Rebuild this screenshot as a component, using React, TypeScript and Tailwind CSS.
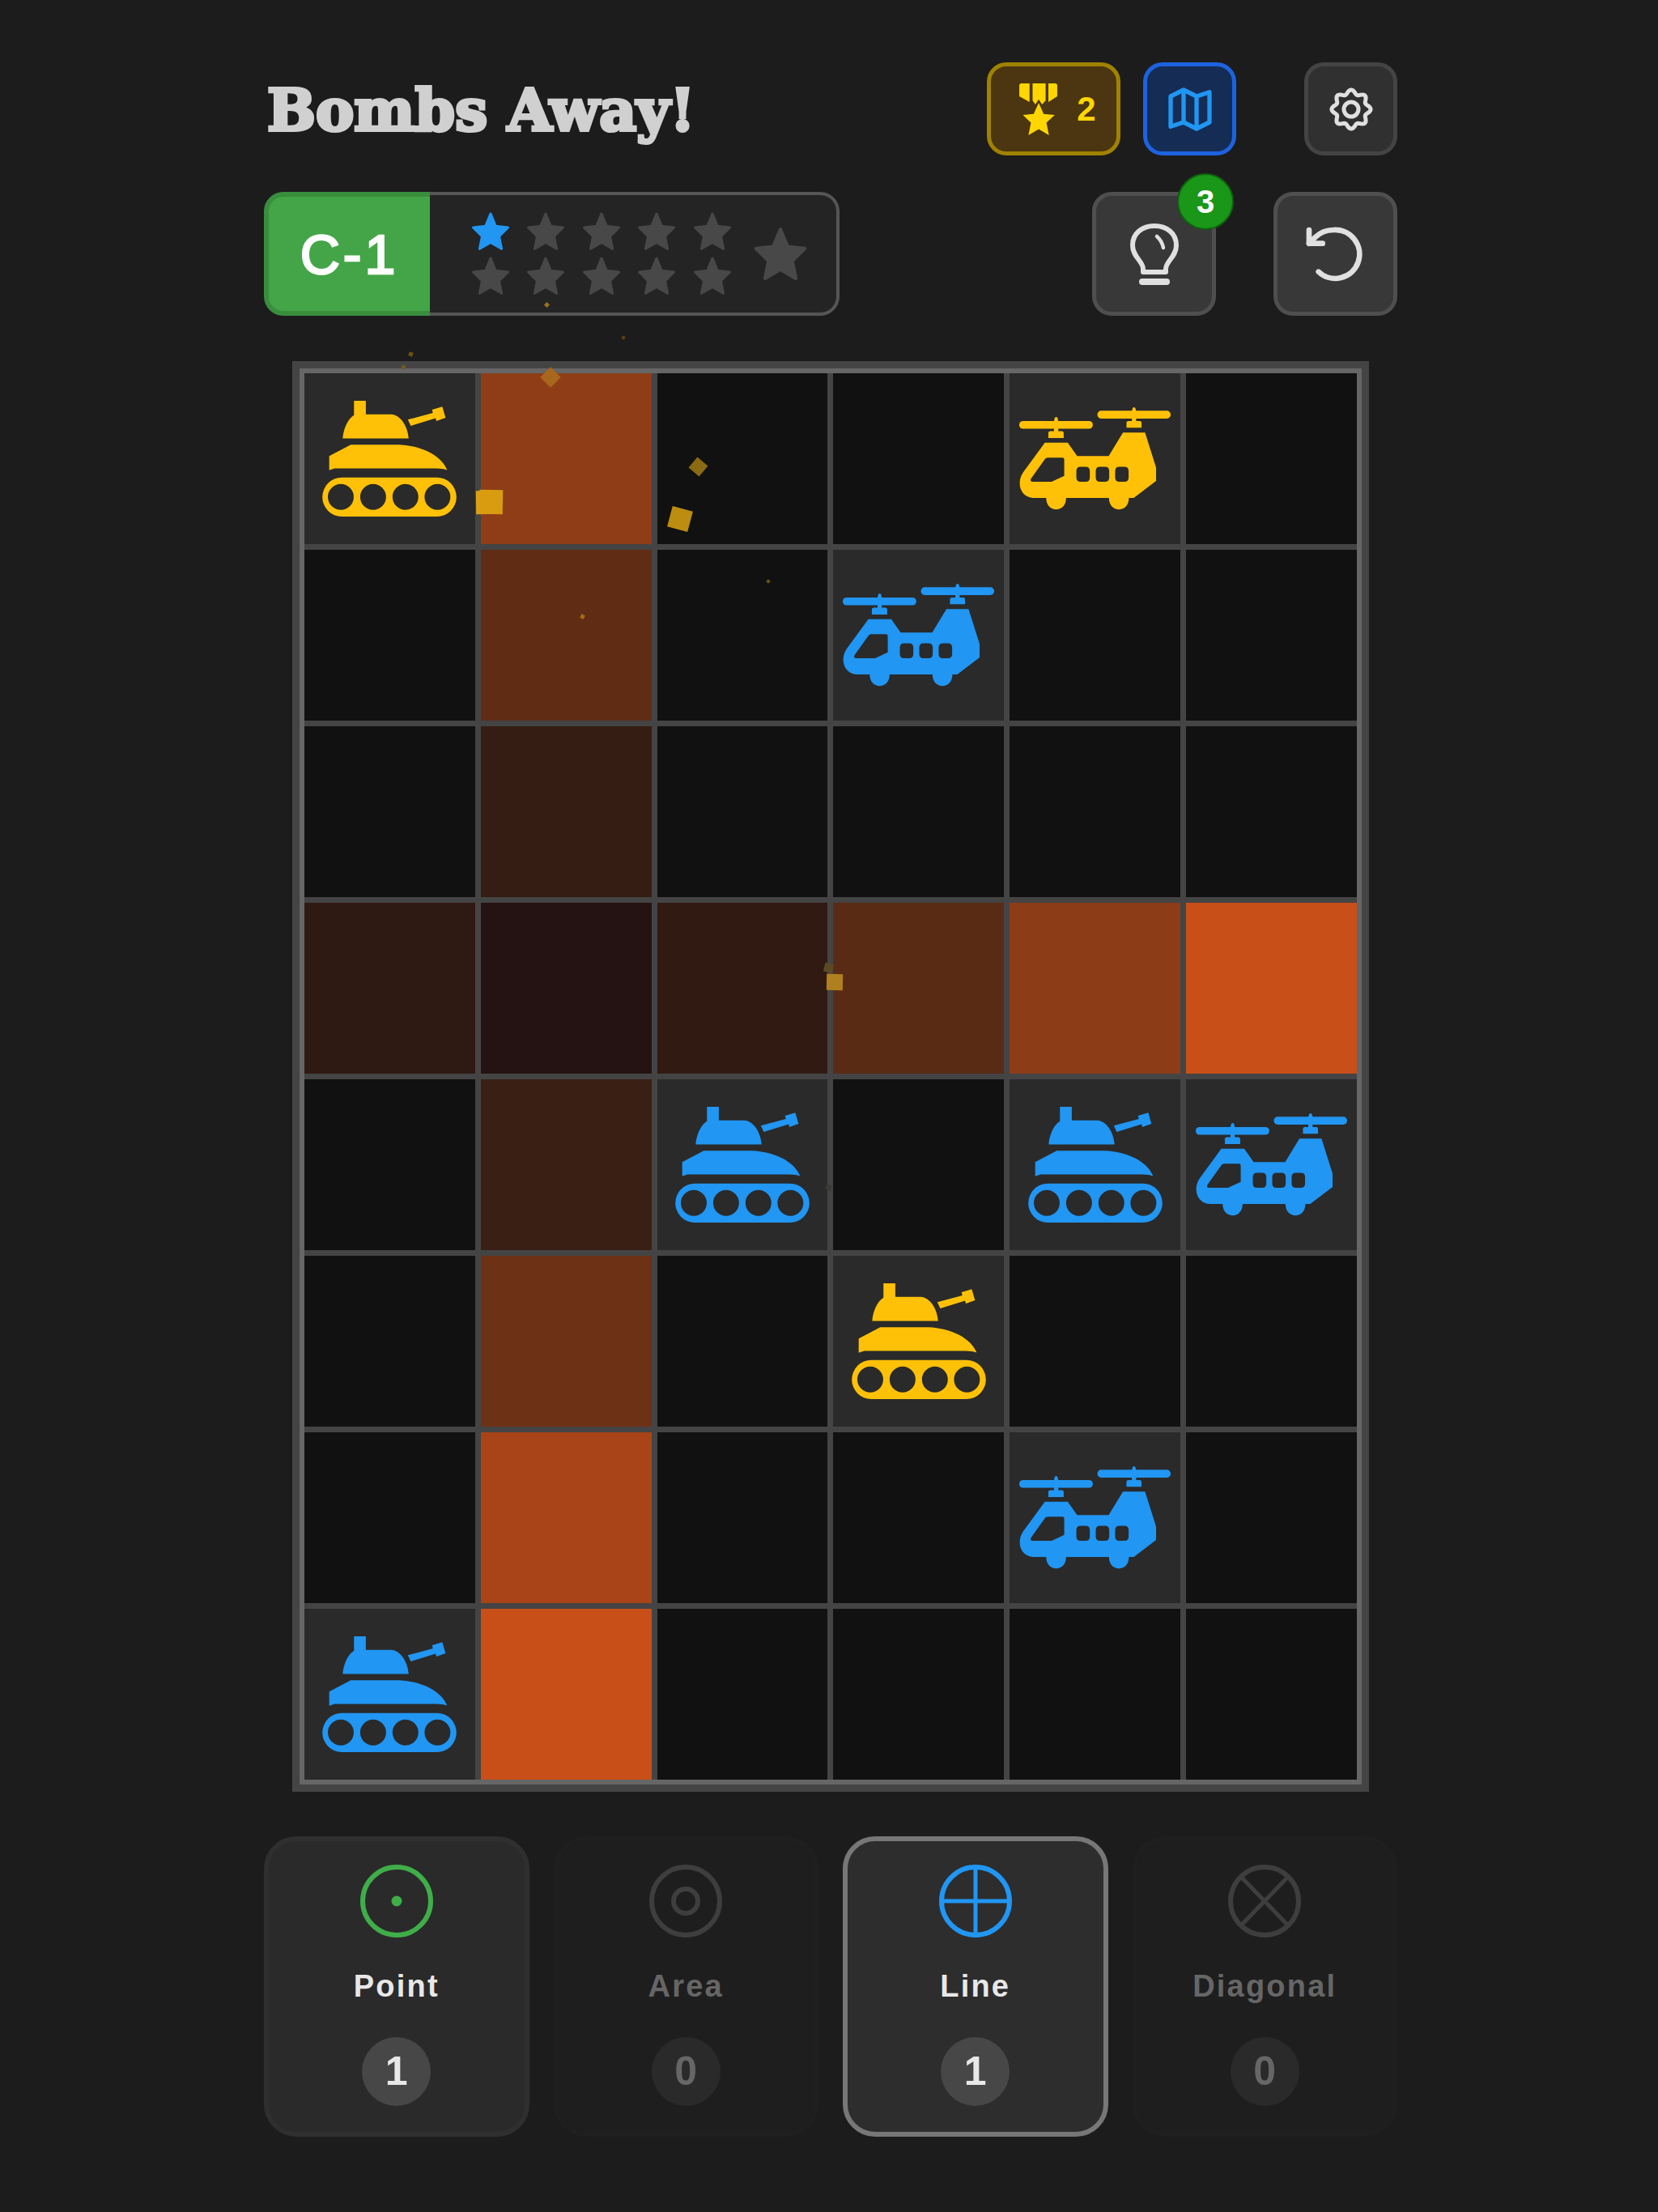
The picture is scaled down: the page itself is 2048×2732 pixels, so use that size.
import React from 'react';

type Unit = 'tank' | 'heli' | null;
type Side = 'yellow' | 'blue';
type Cell = { bg: string; unit?: Unit; side?: Side };

const E: Cell = { bg: 'bg-[#111111]' };
const u = (unit: Unit, side: Side): Cell => ({ bg: 'bg-[#2a2a2a]', unit, side });

const board: Cell[][] = [
  [u('tank', 'yellow'), { bg: 'bg-[#8f3d17]' }, E, E, u('heli', 'yellow'), E],
  [E, { bg: 'bg-[#602c14]' }, E, u('heli', 'blue'), E, E],
  [E, { bg: 'bg-[#351d14]' }, E, E, E, E],
  [{ bg: 'bg-[#2f1a13]' }, { bg: 'bg-[#251212]' }, { bg: 'bg-[#311a12]' }, { bg: 'bg-[#5a2b14]' }, { bg: 'bg-[#8c3c17]' }, { bg: 'bg-[#c94f19]' }],
  [E, { bg: 'bg-[#3a1f14]' }, u('tank', 'blue'), E, u('tank', 'blue'), u('heli', 'blue')],
  [E, { bg: 'bg-[#6d3115]' }, E, u('tank', 'yellow'), E, E],
  [E, { bg: 'bg-[#a84417]' }, E, E, u('heli', 'blue'), E],
  [u('tank', 'blue'), { bg: 'bg-[#c94f19]' }, E, E, E, E],
];

function Tank({ className }: { className: string }) {
  return (
    <svg viewBox="55 45 497 430" className={`w-[166px] h-[143px] ${className}`} fill="currentColor">
      <path d="M172 45H216V95H310C345 97 372 140 375 185H130C133 145 150 112 172 98Z" />
      <path d="M372 115L465 90L462 78L500 67L512 108L478 120L475 110L383 138Z" />
      <path d="M80 250L160 208H340C420 212 495 245 518 302C500 296 480 296 460 296H100L80 303Z" />
      <path
        fillRule="evenodd"
        d="M127 330H480A72.500 72.500 0 0 1 480 475H127A72.500 72.500 0 0 1 127 330ZM123 354A48 48 0 1 0 123 450A48 48 0 1 0 123 354ZM243 354A48 48 0 1 0 243 450A48 48 0 1 0 243 354ZM363 354A48 48 0 1 0 363 450A48 48 0 1 0 363 354ZM482 354A48 48 0 1 0 482 450A48 48 0 1 0 482 354Z"
      />
    </svg>
  );
}

function Heli({ className }: { className: string }) {
  return (
    <svg viewBox="60 72 562 380" className={`w-[187px] h-[127px] ${className}`} fill="currentColor">
      <rect x="60" y="122" width="273" height="29" rx="14" />
      <path d="M189 122L192 110Q197 105 202 110L205 122V160H218Q225 160 225 168V185H168V168Q168 160 175 160H189Z" />
      <rect x="350" y="84" width="272" height="29" rx="14" />
      <path d="M478 84L481 74Q486 69 491 74L494 84V122H507Q514 122 514 130V147H458V130Q458 122 465 122H478Z" />
      <path
        fillRule="evenodd"
        d="M155 203H240L275 252H392L445 165H527L568 295V345L485 408H467C467 465 393 465 393 408H234C234 465 160 465 160 408H115C85 408 62 385 62 355C62 335 68 322 78 308ZM165 258Q160 258 156 263L104 336Q98 348 110 348H180L227 326V265Q227 258 220 258ZM288 292Q272 292 272 308V332Q272 348 288 348H306Q322 348 322 332V308Q322 292 306 292ZM360 292Q344 292 344 308V332Q344 348 360 348H378Q394 348 394 332V308Q394 292 378 292ZM432 292Q416 292 416 308V332Q416 348 432 348H450Q466 348 466 332V308Q466 292 450 292Z"
      />
    </svg>
  );
}

function StarIcon({ className }: { className: string }) {
  return (
    <svg viewBox="0 0 24 24" className={className} fill="currentColor" stroke="currentColor" strokeWidth="1.5" strokeLinejoin="round">
      <polygon points="12,1.500 15,8.800 22.300,9.600 17,14.800 18.500,22.200 12,18.400 5.500,22.200 7,14.800 1.700,9.600 9,8.800" />
    </svg>
  );
}

function MedalIcon() {
  return (
    <svg viewBox="60 38 137 187" className="w-[47px] h-[64px] text-[#ffd600]" fill="currentColor">
      <path d="M68 38H97V105L60 85V46Q60 38 68 38Z" />
      <path d="M108 38H155V100L142 114L130 96L118 114L108 100Z" />
      <path d="M165 38H189Q197 38 197 46V85L165 105Z" />
      <path d="M130 108L148 148L188 152L158 180L167 225L130 203L93 225L102 180L73 152L112 148Z" />
    </svg>
  );
}

function MapIcon() {
  return (
    <svg viewBox="0 0 24 24" className="w-[64px] h-[64px] text-[#2196f3]" fill="none" stroke="currentColor" strokeWidth="2" strokeLinejoin="round">
      <path d="M3 6L9 3L15 6L21 4V18L15 21L9 18L3 20Z" />
      <path d="M9 3V18M15 6V21" />
    </svg>
  );
}

// wavy eight-lobed outline, lucide's gear has sharper teeth than the reference
const gearPath = Array.from({ length: 96 })
  .map((_, i) => {
    const a = (i / 96) * Math.PI * 2;
    const r = 21.5 + 2.6 * Math.cos(8 * a);
    return `${i === 0 ? 'M' : 'L'}${(30 + r * Math.sin(a)).toFixed(2)} ${(30 - r * Math.cos(a)).toFixed(2)}`;
  })
  .join('') + 'Z';

function GearIcon() {
  return (
    <svg viewBox="0 0 60 60" className="w-[60px] h-[60px] text-[#e0e0e0]" fill="none" stroke="currentColor" strokeWidth="5" strokeLinejoin="round">
      <path d={gearPath} />
      <circle cx="30" cy="30" r="9" />
    </svg>
  );
}

function BulbIcon() {
  return (
    <svg viewBox="0 0 60 76" className="w-[60px] h-[76px] text-[#e0e0e0]" fill="none" stroke="currentColor" strokeWidth="6" strokeLinejoin="round" strokeLinecap="round">
      <path d="M16 60V56C16 47 3 41 3 27C3 12 15 3 30 3C45 3 57 12 57 27C57 41 44 47 44 56V60Z" />
      <path d="M33 16Q39 21 41 30" strokeWidth="4.500" />
      <path d="M15 72H45" strokeWidth="8" />
    </svg>
  );
}

function RestartIcon() {
  return (
    <svg viewBox="0 0 24 24" className="w-[80px] h-[80px] text-[#e0e0e0]" fill="none" stroke="currentColor" strokeWidth="2" strokeLinecap="round" strokeLinejoin="round">
      <path d="M6.500 18.500A9 9 0 1 0 12 3A9.750 9.750 0 0 0 5.260 5.740L3 8" />
      <path d="M3 3V8H8" />
    </svg>
  );
}

function ToolIcon({ kind, className }: { kind: string; className: string }) {
  return (
    <svg viewBox="0 0 90 90" className={`w-[90px] h-[90px] ${className}`} fill="none" stroke="currentColor" strokeWidth="6">
      <circle cx="45" cy="45" r="42" />
      {kind === 'point' && <circle cx="45" cy="45" r="6.500" fill="currentColor" stroke="none" />}
      {kind === 'area' && <circle cx="45" cy="45" r="15" />}
      {kind === 'line' && <path d="M45 3V87M3 45H87" strokeWidth="5" />}
      {kind === 'diagonal' && <path d="M16 15L74 75M74 15L16 75" strokeWidth="5" />}
    </svg>
  );
}

const tools = [
  { kind: 'point', label: 'Point', count: 1, card: 'bg-[#2a2a2a] border-[#2f2f2f]', icon: 'text-[#3fae49]', active: true },
  { kind: 'area', label: 'Area', count: 0, card: 'bg-[#1e1e1e] border-[#1f1f1f]', icon: 'text-[#3e3e3e]', active: false },
  { kind: 'line', label: 'Line', count: 1, card: 'bg-[#2d2d2d] border-[#777777]', icon: 'text-[#2196f3]', active: true },
  { kind: 'diagonal', label: 'Diagonal', count: 0, card: 'bg-[#1e1e1e] border-[#1f1f1f]', icon: 'text-[#3e3e3e]', active: false },
];

// debris from the explosion, flying over the board
const debris = [
  'left-[505px] top-[435px] w-[5px] h-[5px] rotate-[20deg] bg-[#6e5116]',
  'left-[496px] top-[451px] w-[5px] h-[5px] rotate-[40deg] bg-[#6e5a22]',
  'left-[768px] top-[415px] w-[4px] h-[4px] rotate-[20deg] bg-[#5a4415]',
  'left-[673px] top-[374px] w-[5px] h-[5px] rotate-[45deg] bg-[#a07020]',
  'left-[671px] top-[457px] w-[18px] h-[18px] rotate-[45deg] bg-[#a8671c]',
  'left-[588px] top-[606px] w-[28px] h-[29px] rotate-[-1deg] bg-[#dca013]',
  'left-[592px] top-[605px] w-[29px] h-[30px] rotate-[1deg] bg-[#d99c10]',
  'left-[854px] top-[568px] w-[17px] h-[17px] rotate-[40deg] bg-[#8a6a12]',
  'left-[827px] top-[628px] w-[26px] h-[26px] rotate-[15deg] bg-[#bc8d10]',
  'left-[947px] top-[716px] w-[4px] h-[4px] rotate-[45deg] bg-[#6e5412]',
  'left-[717px] top-[759px] w-[5px] h-[5px] rotate-[30deg] bg-[#a56a1a]',
  'left-[1018px] top-[1190px] w-[11px] h-[11px] rotate-[15deg] bg-[#5c4a25]',
  'left-[1021px] top-[1203px] w-[20px] h-[20px] rotate-[1deg] bg-[#b08020]',
  'left-[1020px] top-[1463px] w-[7px] h-[7px] rotate-[30deg] bg-[#3c3c34]',
];

export default function App() {
  return (
    <div className="relative min-h-[2732px] bg-[#1c1c1c] pt-[77px] pl-[326px] font-['Liberation_Sans',sans-serif]">
      <div className="w-[1400px]">
        <div className="flex items-center h-[115px]">
          <h1 className="pl-[4px] pt-[4px] text-[71px] leading-none font-bold text-[#d0d0d0] font-['DejaVu_Serif',serif] [-webkit-text-stroke:4px_#d0d0d0]">
            Bombs Away!
          </h1>
          <button className="ml-auto w-[165px] h-[115px] rounded-[24px] border-[5px] border-[#a08200] bg-[#4b3611] flex items-center justify-center gap-[24px] pl-[10px]">
            <MedalIcon />
            <span className="text-[42px] font-bold text-[#ffd600]">2</span>
          </button>
          <button className="ml-[28px] w-[115px] h-[115px] rounded-[24px] border-[5px] border-[#1d63e0] bg-[#152c55] flex items-center justify-center">
            <MapIcon />
          </button>
          <button className="ml-[84px] w-[115px] h-[115px] rounded-[24px] border-[5px] border-[#444444] bg-[#303030] flex items-center justify-center">
            <GearIcon />
          </button>
        </div>

        <div className="flex items-center h-[153px] mt-[45px]">
          <div className="flex w-[711px] h-full">
            <div className="w-[205px] rounded-l-[24px] border-[6px] border-r-0 border-[#388e3c] bg-[#43a547] flex items-center justify-center text-[68px] font-normal text-white tracking-[4px] [-webkit-text-stroke:2.500px_#ffffff]">
              C-1
            </div>
            <div className="flex-1 rounded-r-[24px] border-[4px] border-l-0 border-[#555555] bg-[#242424] flex items-center pl-[50px]">
              <div className="grid grid-cols-5 gap-x-[18.400px] gap-y-[5px]">
                {Array.from({ length: 10 }).map((_, i) => (
                  <StarIcon key={i} className={`w-[50px] h-[50px] ${i === 0 ? 'text-[#2196f3]' : 'text-[#484848]'}`} />
                ))}
              </div>
              <StarIcon className="ml-[24px] w-[70px] h-[70px] text-[#484848]" />
            </div>
          </div>
          <button className="relative ml-auto w-[153px] h-[153px] rounded-[24px] border-[5px] border-[#4f4f4f] bg-[#383838] flex items-center justify-center">
            <BulbIcon />
            <span className="absolute -right-[27px] -top-[28px] w-[70px] h-[70px] rounded-full border-[2px] border-[#0f5f0f] bg-[#1a9619] flex items-center justify-center text-[40px] font-bold text-white">
              3
            </span>
          </button>
          <button className="ml-[71px] w-[153px] h-[153px] rounded-[24px] border-[5px] border-[#4f4f4f] bg-[#383838] flex items-center justify-center pr-[6px]">
            <RestartIcon />
          </button>
        </div>

        <div className="mt-[56px] mx-[35px] border-[9px] border-[#444444]">
          <div className="border-[6px] border-[#666666] bg-[#444444] grid grid-cols-6 gap-[7px]">
            {board.flat().map((cell, i) => (
              <div key={i} className={`h-[211px] flex items-center justify-center ${cell.bg}`}>
                {cell.unit === 'tank' && <Tank className={cell.side === 'yellow' ? 'text-[#ffc107]' : 'text-[#2196f3]'} />}
                {cell.unit === 'heli' && <Heli className={cell.side === 'yellow' ? 'text-[#ffc107]' : 'text-[#2196f3]'} />}
              </div>
            ))}
          </div>
        </div>

        <div className="mt-[55px] grid grid-cols-4 gap-[30px]">
          {tools.map(t => (
            <div key={t.kind} className={`h-[371px] rounded-[40px] border-[6px] flex flex-col items-center pt-[29px] ${t.card}`}>
              <ToolIcon kind={t.kind} className={t.icon} />
              <div className={`mt-[38px] h-[44px] leading-[44px] text-[38px] font-bold tracking-[2.200px] ${t.active ? 'text-[#e8e8e8]' : 'text-[#666666]'}`}>
                {t.label}
              </div>
              <div className={`mt-[41px] w-[85px] h-[85px] rounded-full flex items-center justify-center text-[50px] font-bold ${t.active ? 'bg-[#474747] text-[#e8e8e8]' : 'bg-[#2a2a2a] text-[#666666]'}`}>
                {t.count}
              </div>
            </div>
          ))}
        </div>
      </div>

      {debris.map((d, i) => (
        <div key={i} className={`absolute ${d}`} />
      ))}
    </div>
  );
}
